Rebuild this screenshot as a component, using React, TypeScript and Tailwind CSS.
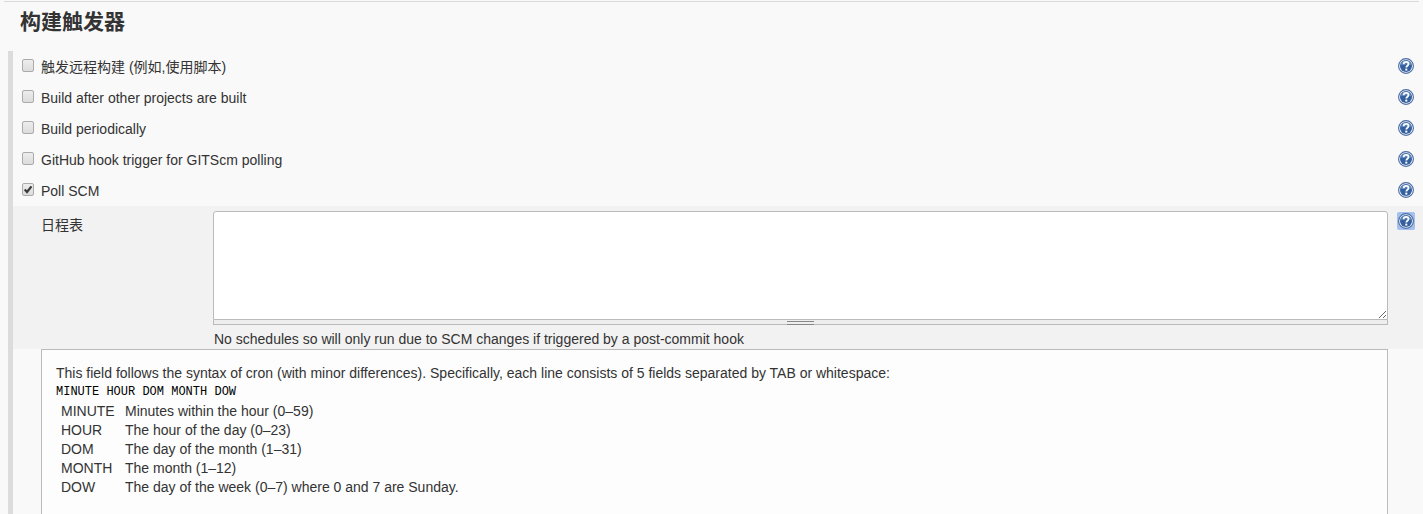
import { useState } from "react";

const triggers = [
  { id: "remote", label: "触发远程构建 (例如,使用脚本)" },
  { id: "upstream", label: "Build after other projects are built" },
  { id: "timer", label: "Build periodically" },
  { id: "github", label: "GitHub hook trigger for GITScm polling" },
  { id: "scm", label: "Poll SCM" },
];

const fields = [
  ["MINUTE", "Minutes within the hour (0–59)"],
  ["HOUR", "The hour of the day (0–23)"],
  ["DOM", "The day of the month (1–31)"],
  ["MONTH", "The month (1–12)"],
  ["DOW", "The day of the week (0–7) where 0 and 7 are Sunday."],
];

function HelpButton({ label, active = false }: { label: string; active?: boolean }) {
  return (
    <button
      type="button"
      aria-label={`Help for ${label}`}
      className={`flex size-[18px] shrink-0 items-center justify-center rounded-xs ${active ? "bg-[#a3c0ee]" : ""}`}
    >
      <svg viewBox="0 0 16 16" className="size-4" aria-hidden="true">
        <circle cx="8" cy="8" r="7.4" fill="#f4f7fb" stroke="#4a6ba0" strokeWidth="1.1" />
        <circle cx="8" cy="8" r="6" fill="#34609f" />
        <path d="M2.2 7.2a5.9 5.9 0 0 1 11.6 0C10 6.2 6 6.4 2.2 7.2z" fill="#5c83bb" />
        <path
          d="M5.7 6.2C5.7 4.7 6.7 3.9 8.1 3.9s2.4.8 2.4 2.1c0 1.7-2.2 1.7-2.2 3.5"
          fill="none"
          stroke="#fff"
          strokeWidth="1.8"
        />
        <rect x="7.3" y="10.6" width="2" height="2" fill="#fff" />
      </svg>
    </button>
  );
}

function Trigger({ id, label }: { id: string; label: string }) {
  const [checked, setChecked] = useState(id === "scm");
  return (
    <div className="flex h-[31px] items-start justify-between pt-[6px] pr-2 pl-[9px]">
      <div className="flex items-start gap-[7px]">
        <span className="grid pt-[2px]">
          <input
            id={id}
            type="checkbox"
            checked={checked}
            onChange={() => setChecked(!checked)}
            className="col-start-1 row-start-1 h-[13px] w-3 appearance-none rounded-xs border border-[#ababab] bg-linear-to-b from-[#ededed] to-[#dcdcdc]"
          />
          {checked && (
            <svg viewBox="0 0 12 13" className="pointer-events-none col-start-1 row-start-1 h-[13px] w-3" aria-hidden="true">
              <path d="M2.7 6.6 5 9 9.5 3.4" fill="none" stroke="#3a3a3a" strokeWidth="2.2" />
            </svg>
          )}
        </span>
        <label htmlFor={id} className="pt-px">{label}</label>
      </div>
      <HelpButton label={label} />
    </div>
  );
}

export default function App() {
  return (
    <main className="flex min-h-screen flex-col bg-[#f9f9f9] font-['Liberation_Sans','Noto_Sans_CJK_SC',sans-serif] text-sm leading-[19px] text-[#333]">
      <div className="mx-1 border-b border-[#dadada] pt-px" />
      <h2 className="flex h-[49px] items-start pt-1 pl-5 text-[21px] leading-8 font-bold">构建触发器</h2>
      <section className="ml-2 flex grow flex-col border-l-[5px] border-[#dcdcdc]">
        {triggers.map((t) => (
          <Trigger key={t.id} id={t.id} label={t.label} />
        ))}
        <div className="flex items-start bg-[#f2f2f2] pt-[5px] pr-2 pl-7">
          <label htmlFor="schedule" className="w-[172px] shrink-0 pt-[5px]">日程表</label>
          <div className="mr-[9px] grow">
            <textarea
              id="schedule"
              className="block h-[109px] w-full resize rounded-t-[3px] border border-[#bbb] bg-white p-1 outline-none"
            />
            <div className="flex h-[5px] flex-col items-center border-x border-b border-[#bbb] bg-[#eee] pt-px">
              <div className="h-1 w-[27px] shrink-0 border-y border-[#888]" />
            </div>
            <p className="pt-[5px] pl-px">
              No schedules so will only run due to SCM changes if triggered by a post-commit hook
            </p>
          </div>
          <div className="pt-px">
            <HelpButton label="日程表" active />
          </div>
        </div>
        <div className="mr-[35px] ml-7 grow border border-b-0 border-[#bbb] bg-[#fdfdfd] px-[14px] pt-[14px]">
          <p>
            This field follows the syntax of cron (with minor differences). Specifically, each line consists of 5
            fields separated by TAB or whitespace:
          </p>
          <pre className="font-['Liberation_Mono',monospace] text-xs leading-[19px] text-black">MINUTE HOUR DOM MONTH DOW</pre>
          <table className="ml-[5px]">
            <tbody>
              {fields.map(([name, text]) => (
                <tr key={name}>
                  <td className="w-16 p-0">{name}</td>
                  <td className="p-0">{text}</td>
                </tr>
              ))}
            </tbody>
          </table>
        </div>
      </section>
    </main>
  );
}
